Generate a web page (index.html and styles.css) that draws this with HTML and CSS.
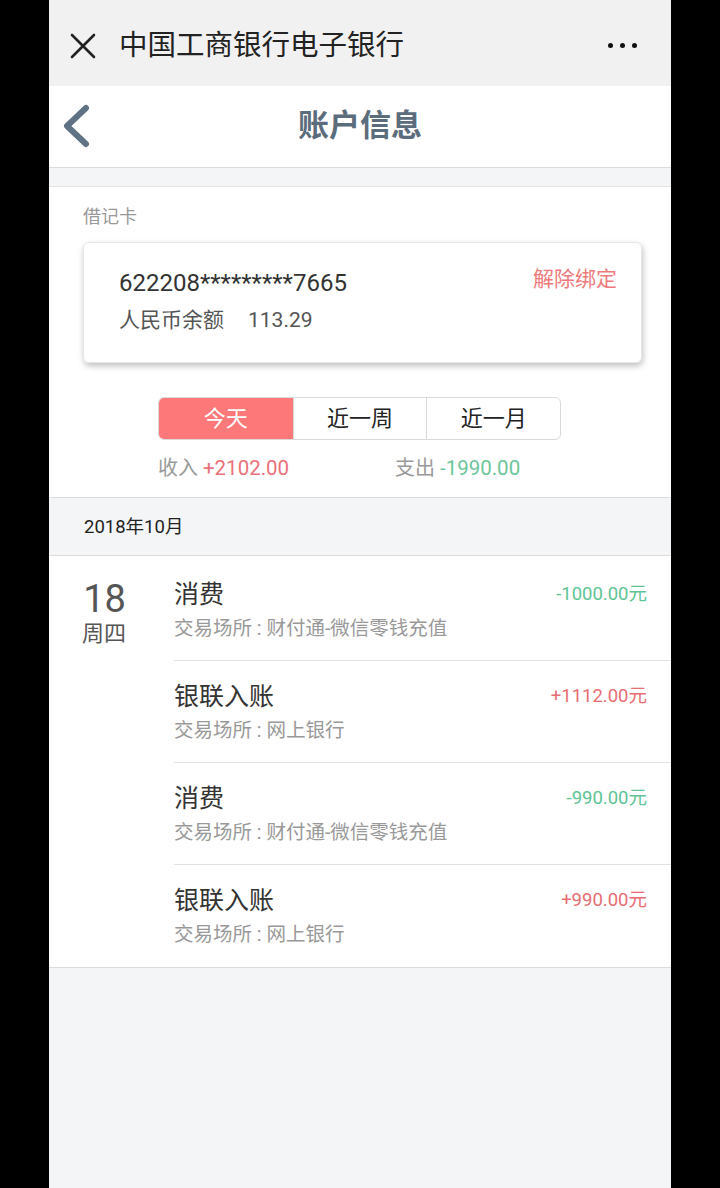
FILE: index.html
```html
<!DOCTYPE html>
<html lang="zh-CN">
<head>
<meta charset="utf-8">
<title>账户信息</title>
<link rel="stylesheet" href="styles.css">
</head>
<body>
<div class="screen">
  <div class="topbar">
    <svg class="close-icon" width="26" height="26" viewBox="0 0 26 26"><path d="M2 2 L24 24 M24 2 L2 24" stroke="#222" stroke-width="2.6" fill="none" stroke-linecap="round"/></svg>
    <div class="topbar-title">中国工商银行电子银行</div>
    <div class="more"><span></span><span></span><span></span></div>
  </div>
  <div class="header">
    <svg class="back-icon" width="30" height="44" viewBox="0 0 30 44"><path d="M25 4 L6 22 L25 40" stroke="#5f7384" stroke-width="6" fill="none" stroke-linecap="round" stroke-linejoin="round"/></svg>
    <div class="header-title">账户信息</div>
  </div>
  <div class="gap-band"></div>
  <div class="account">
    <div class="account-label">借记卡</div>
    <div class="card">
      <div class="card-info">
        <div class="card-no">622208*********7665</div>
        <div class="card-balance"><span class="bal-label">人民币余额</span><span class="bal-value">113.29</span></div>
      </div>
      <div class="unbind">解除绑定</div>
    </div>
    <div class="tabs">
      <div class="tab active">今天</div>
      <div class="tab">近一周</div>
      <div class="tab">近一月</div>
    </div>
    <div class="summary">
      <div class="sum-item"><span class="sum-label">收入</span> <span class="income">+2102.00</span></div>
      <div class="sum-item"><span class="sum-label">支出</span> <span class="expense">-1990.00</span></div>
    </div>
  </div>
  <div class="month">2018年10月</div>
  <div class="list">
    <div class="day">
      <div class="day-num">18</div>
      <div class="day-week">周四</div>
    </div>
    <div class="items">
      <div class="item">
        <div class="item-top"><span class="item-title">消费</span><span class="amount minus">-1000.00元</span></div>
        <div class="item-sub">交易场所 : 财付通-微信零钱充值</div>
      </div>
      <div class="item">
        <div class="item-top"><span class="item-title">银联入账</span><span class="amount plus">+1112.00元</span></div>
        <div class="item-sub">交易场所 : 网上银行</div>
      </div>
      <div class="item">
        <div class="item-top"><span class="item-title">消费</span><span class="amount minus">-990.00元</span></div>
        <div class="item-sub">交易场所 : 财付通-微信零钱充值</div>
      </div>
      <div class="item">
        <div class="item-top"><span class="item-title">银联入账</span><span class="amount plus">+990.00元</span></div>
        <div class="item-sub">交易场所 : 网上银行</div>
      </div>
    </div>
  </div>
  <div class="rest"></div>
</div>
</body>
</html>
```
FILE: styles.css
```css
* { box-sizing: border-box; }
html, body { margin: 0; padding: 0; }
body {
  background: #000;
  font-family: Roboto, "Noto Sans CJK SC", sans-serif;
  width: 720px;
  height: 1188px;
  overflow: hidden;
}
.screen {
  margin-left: 49px;
  width: 622px;
  height: 1188px;
  background: #f4f5f7;
  display: flex;
  flex-direction: column;
}
.topbar {
  height: 86px;
  background: #f1f1f1;
  display: flex;
  align-items: center;
  padding-left: 21px;
  padding-right: 34px;
  padding-top: 5px;
}
.close-icon { flex: none; }
.topbar-title {
  margin-left: 23px;
  font-size: 28.5px;
  color: #222;
  flex: 1;
  line-height: 40px;
}
.more { display: flex; gap: 7px; }
.more span {
  width: 5px; height: 5px; border-radius: 50%; background: #111; display: block;
}
.header {
  height: 82px;
  background: #fff;
  border-bottom: 1px solid #dcdcdc;
  display: flex;
  align-items: center;
  justify-content: center;
  position: relative;
}
.back-icon { position: absolute; left: 12px; top: 18px; }
.header-title {
  font-size: 31px;
  font-weight: bold;
  color: #5b6c7c;
  line-height: 40px;
  margin-top: -2px;
}
.gap-band {
  height: 19px;
  border-bottom: 1px solid #e2e2e2;
}
.account {
  background: #fff;
  padding: 16px 29px 15px 34px;
  border-bottom: 1px solid #dcdcdc;
}
.account-label {
  font-size: 18px;
  color: #999;
  line-height: 28px;
}
.card {
  margin-top: 11px;
  height: 121px;
  border-radius: 6px;
  border: 1px solid #e6e6e6;
  box-shadow: 1px 3px 6px rgba(0,0,0,0.25);
  display: flex;
  justify-content: space-between;
  padding: 25px 24px 0 35px;
}
.card-no {
  font-size: 24px;
  color: #333;
  line-height: 30px;
}
.card-balance {
  margin-top: 7px;
  font-size: 21px;
  color: #555;
  line-height: 30px;
}
.bal-value { margin-left: 24px; }
.unbind {
  font-size: 21px;
  color: #ee7a7c;
  line-height: 30px;
  margin-top: -4px;
}
.tabs {
  margin: 34px 0 0 75px;
  width: 403px;
  height: 43px;
  border: 1px solid #dadada;
  border-radius: 6px;
  overflow: hidden;
  display: grid;
  grid-template-columns: 1fr 1fr 1fr;
}
.tab {
  display: flex;
  align-items: center;
  justify-content: center;
  font-size: 22px;
  color: #222;
  padding-bottom: 5px;
}
.tab + .tab { border-left: 1px solid #dadada; }
.tab.active { background: #fd7878; color: #fff; }
.summary {
  width: 403px;
  margin: 14px 0 0 75px;
  display: grid;
  grid-template-columns: 237px auto;
  font-size: 20px;
  line-height: 28px;
}
.income, .expense { font-size: 20.5px; }
.sum-label { color: #999; }
.income { color: #ea707a; }
.expense { color: #6cc69a; }
.month {
  height: 58px;
  padding-left: 35px;
  padding-bottom: 3px;
  display: flex;
  align-items: center;
  font-size: 18.5px;
  color: #222;
  border-bottom: 1px solid #dcdcdc;
}
.list {
  background: #fff;
  display: flex;
  padding-top: 3px;
  border-bottom: 1px solid #dcdcdc;
}
.day {
  width: 125px;
  flex: none;
  padding-left: 33px;
  padding-top: 21px;
  color: #555;
}
.day-num {
  font-size: 38px;
  line-height: 38px;
  width: 45px;
  text-align: center;
}
.day-week {
  font-size: 22px;
  line-height: 32px;
}
.items { flex: 1; }
.item {
  height: 102px;
  padding: 16px 24px 0 0;
  border-bottom: 1px solid #e0e0e0;
}
.item:last-child { border-bottom: none; height: 102px; }
.item-top {
  display: flex;
  justify-content: space-between;
  align-items: center;
  height: 34px;
}
.item-title { font-size: 25px; color: #333; }
.amount { font-size: 18.5px; }
.amount.minus { color: #5ec495; }
.amount.plus { color: #e86c72; }
.item-sub {
  margin-top: 6px;
  font-size: 19.5px;
  line-height: 28px;
  color: #999;
}
.rest { flex: 1; }
```
